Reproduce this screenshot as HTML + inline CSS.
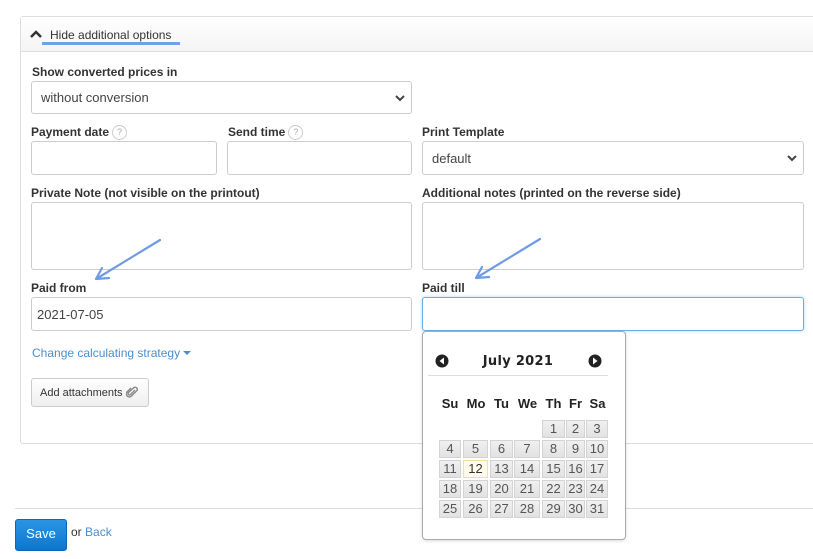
<!DOCTYPE html>
<html><head><style>
*{box-sizing:border-box;margin:0;padding:0}
body{width:813px;height:559px;background:#fff;font-family:"Liberation Sans",Arial,sans-serif;font-size:12px;color:#333;position:relative;overflow:hidden}
.a{position:absolute}
.lbl{position:absolute;font-weight:bold;font-size:12px;color:#333}
.inp{position:absolute;border:1px solid #ccc;border-radius:3px;background:#fff}
.sel{position:absolute;border:1px solid #ccc;border-radius:3px;background:#fff;font-size:13px;color:#444;padding-left:9px;display:flex;align-items:center}
.chev{position:absolute;right:6px;top:50%;margin-top:-5px}
.q{display:inline-block;width:15px;height:15px;border:1px solid #ccc;border-radius:50%;font-size:9px;color:#aaa;text-align:center;line-height:13px;font-weight:normal;vertical-align:middle;margin-left:3px}
.c{position:absolute;height:18px;background:linear-gradient(#f0f0f0,#e2e2e2);border:1px solid #d3d3d3;color:#555;font-size:13px;text-align:center;line-height:16px}
.dh{position:absolute;top:396px;font-weight:bold;font-size:13px;color:#222;text-align:center}
</style></head><body>
<div class="a" style="left:20px;top:16px;width:810px;height:428px;border:1px solid #ddd;border-radius:3px"></div>
<div class="a" style="left:21px;top:17px;width:800px;height:35px;background:linear-gradient(#fff,#f4f4f4);border-bottom:1px solid #ddd"></div>
<svg class="a" style="left:30px;top:30px" width="12" height="9"><path d="M1 7 L6 2 L11 7" stroke="#333" stroke-width="2.5" fill="none"/></svg>
<div class="a" style="left:50px;top:28px;font-size:12px;color:#333">Hide additional options</div>
<div class="a" style="left:42px;top:42px;width:138px;height:3px;background:#6ea0ee"></div>

<div class="lbl" style="left:32px;top:65px">Show converted prices in</div>
<div class="sel" style="left:31px;top:81px;width:381px;height:33px">without conversion<svg class="chev" width="10" height="10"><path d="M1 3 L5 7 L9 3" stroke="#444" stroke-width="2" fill="none"/></svg></div>

<div class="lbl" style="left:31px;top:125px">Payment date<span class="q">?</span></div>
<div class="lbl" style="left:228px;top:125px">Send time<span class="q">?</span></div>
<div class="lbl" style="left:422px;top:125px">Print Template</div>
<div class="inp" style="left:31px;top:141px;width:186px;height:34px"></div>
<div class="inp" style="left:227px;top:141px;width:185px;height:34px"></div>
<div class="sel" style="left:422px;top:141px;width:382px;height:34px">default<svg class="chev" width="10" height="10"><path d="M1 3 L5 7 L9 3" stroke="#444" stroke-width="2" fill="none"/></svg></div>

<div class="lbl" style="left:31px;top:186px">Private Note (not visible on the printout)</div>
<div class="lbl" style="left:422px;top:186px">Additional notes (printed on the reverse side)</div>
<div class="inp" style="left:31px;top:202px;width:381px;height:68px"></div>
<div class="inp" style="left:422px;top:202px;width:382px;height:68px"></div>

<svg class="a" style="left:0;top:0" width="813" height="559">
<g stroke="#6f9be6" stroke-width="2.2" fill="none" stroke-linecap="round">
<path d="M160 240 L96 279 M96 279 L109 278 M96 279 L102 268"/>
<path d="M540 239 L476 278 M476 278 L489 277 M476 278 L482 267"/>
</g></svg>

<div class="lbl" style="left:31px;top:281px">Paid from</div>
<div class="lbl" style="left:422px;top:281px">Paid till</div>
<div class="inp" style="left:31px;top:297px;width:381px;height:34px;font-size:13px;color:#444;padding:9px 0 0 5px">2021-07-05</div>
<div class="inp" style="left:422px;top:297px;width:382px;height:34px;border-color:#66afe9;box-shadow:0 0 3px rgba(102,175,233,.5)"></div>

<div class="a" style="left:32px;top:346px;color:#4a8ed0;font-size:12px">Change calculating strategy <svg width="8" height="5" style="vertical-align:middle"><path d="M0 0 L8 0 L4 4Z" fill="#4a8ed0"/></svg></div>
<div class="a" style="left:31px;top:378px;width:118px;height:29px;border:1px solid #ccc;border-radius:3px;background:linear-gradient(#fff,#eee);font-size:11px;color:#333;padding:7px 0 0 8px">Add attachments <svg width="12" height="12" style="vertical-align:-2px"><path d="M9 4 L4.5 8.5 A1.3 1.3 0 0 1 2.5 6.5 L8 1.5 A2.2 2.2 0 0 1 11 4.5 L5.5 10 A3 3 0 0 1 1.2 5.8 L5 2" stroke="#888" stroke-width="1.4" fill="none"/></svg></div>

<div class="a" style="left:15px;top:508px;width:800px;height:1px;background:#ddd"></div>
<div class="a" style="left:15px;top:519px;width:52px;height:32px;background:linear-gradient(#2b95e3,#0b76d0);border:1px solid #0a68b8;border-radius:3px;color:#fff;font-size:13px;text-align:center;line-height:28px">Save</div>
<div class="a" style="left:71px;top:525px;font-size:12px;color:#333">or <span style="color:#4a8ed0">Back</span></div>

<div class="a" style="left:422px;top:331px;width:204px;height:209px;border:1px solid #aaa;border-radius:4px;background:#fff;box-shadow:0 1px 3px rgba(0,0,0,.15)"></div>
<div class="a" style="left:428px;top:375px;width:180px;height:1px;background:#ddd"></div>
<svg class="a" style="left:435px;top:354px" width="14" height="14"><circle cx="7" cy="7" r="6.5" fill="#222"/><path d="M9 3.5 L4.5 7 L9 10.5Z" fill="#fff"/></svg>
<svg class="a" style="left:588px;top:354px" width="14" height="14"><circle cx="7" cy="7" r="6.5" fill="#222"/><path d="M5 3.5 L9.5 7 L5 10.5Z" fill="#fff"/></svg>
<div class="a" style="left:460px;top:354px;width:116px;text-align:center;font-weight:bold;font-size:13px;color:#222;font-family:'DejaVu Sans',sans-serif;letter-spacing:0.3px">July 2021</div>
<div class="dh" style="left:439px;width:22px">Su</div>
<div class="dh" style="left:463px;width:26px">Mo</div>
<div class="dh" style="left:490px;width:23px">Tu</div>
<div class="dh" style="left:514px;width:27px">We</div>
<div class="dh" style="left:542px;width:23px">Th</div>
<div class="dh" style="left:566px;width:19px">Fr</div>
<div class="dh" style="left:586px;width:23px">Sa</div>
<div class="c" style="left:542px;top:420px;width:23px">1</div><div class="c" style="left:566px;top:420px;width:19px">2</div><div class="c" style="left:586px;top:420px;width:22px">3</div>
<div class="c" style="left:439px;top:440px;width:22px">4</div><div class="c" style="left:463px;top:440px;width:25px">5</div><div class="c" style="left:490px;top:440px;width:23px">6</div><div class="c" style="left:514px;top:440px;width:26px">7</div><div class="c" style="left:542px;top:440px;width:23px">8</div><div class="c" style="left:566px;top:440px;width:19px">9</div><div class="c" style="left:586px;top:440px;width:22px">10</div>
<div class="c" style="left:439px;top:460px;width:22px">11</div><div class="c" style="left:463px;top:460px;width:25px;background:#fffbeb;border-color:#f3df9f;color:#333">12</div><div class="c" style="left:490px;top:460px;width:23px">13</div><div class="c" style="left:514px;top:460px;width:26px">14</div><div class="c" style="left:542px;top:460px;width:23px">15</div><div class="c" style="left:566px;top:460px;width:19px">16</div><div class="c" style="left:586px;top:460px;width:22px">17</div>
<div class="c" style="left:439px;top:480px;width:22px">18</div><div class="c" style="left:463px;top:480px;width:25px">19</div><div class="c" style="left:490px;top:480px;width:23px">20</div><div class="c" style="left:514px;top:480px;width:26px">21</div><div class="c" style="left:542px;top:480px;width:23px">22</div><div class="c" style="left:566px;top:480px;width:19px">23</div><div class="c" style="left:586px;top:480px;width:22px">24</div>
<div class="c" style="left:439px;top:500px;width:22px">25</div><div class="c" style="left:463px;top:500px;width:25px">26</div><div class="c" style="left:490px;top:500px;width:23px">27</div><div class="c" style="left:514px;top:500px;width:26px">28</div><div class="c" style="left:542px;top:500px;width:23px">29</div><div class="c" style="left:566px;top:500px;width:19px">30</div><div class="c" style="left:586px;top:500px;width:22px">31</div>
</body></html>
